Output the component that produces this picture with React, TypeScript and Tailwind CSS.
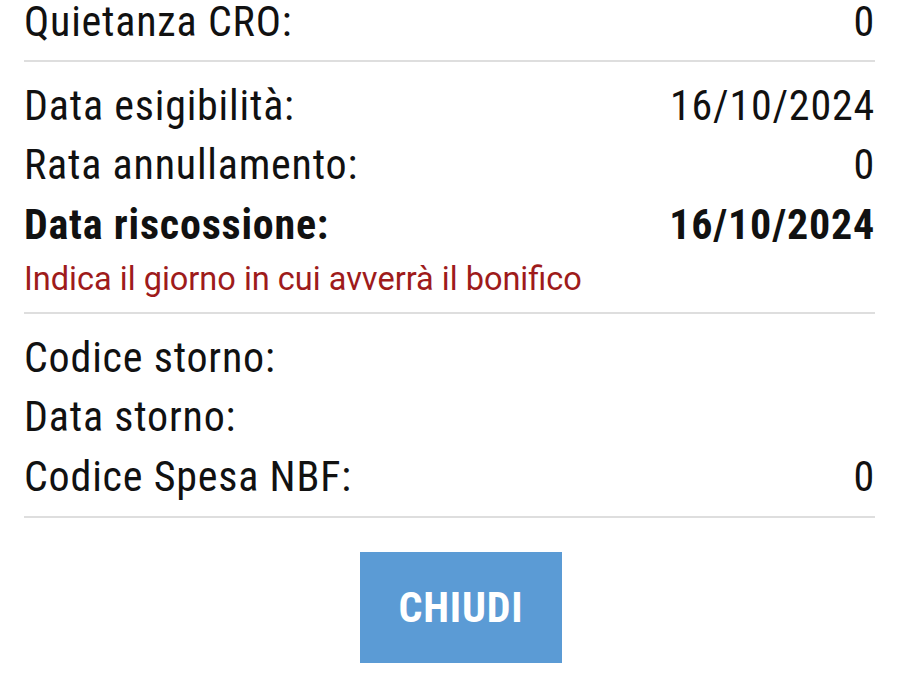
type Row = { label: string; value?: string; bold?: boolean }

const sections: { rows: Row[]; note?: string; pb: string }[] = [
  { rows: [{ label: 'Quietanza CRO:', value: '0' }], pb: 'pb-[9px]' },
  {
    rows: [
      { label: 'Data esigibilità:', value: '16/10/2024' },
      { label: 'Rata annullamento:', value: '0' },
      { label: 'Data riscossione:', value: '16/10/2024', bold: true },
    ],
    note: 'Indica il giorno in cui avverrà il bonifico',
    pb: 'pb-[9px]',
  },
  {
    rows: [
      { label: 'Codice storno:' },
      { label: 'Data storno:' },
      { label: 'Codice Spesa NBF:', value: '0' },
    ],
    pb: 'pb-[10px]',
  },
]

function DetailRow({ label, value, bold }: Row) {
  return (
    <div
      className={`flex justify-between text-[42px] leading-[59.5px] tracking-[0.8px] text-[#111] font-stretch-condensed ${
        bold ? 'font-bold' : 'font-normal'
      }`}
    >
      <span>{label}</span>
      <span>{value}</span>
    </div>
  )
}

export default function App() {
  return (
    <div className="min-h-[694px] overflow-hidden bg-white font-['Roboto',sans-serif]">
      <div className="mt-[-22px] px-6">
        {sections.map((s, i) => (
          <div key={i} className={`border-b-2 border-[#dedede] pt-[13.5px] ${s.pb}`}>
            {s.rows.map((r) => (
              <DetailRow key={r.label} {...r} />
            ))}
            {s.note && (
              <p className="mt-[2px] mb-[1px] text-[32.5px] leading-[46px] text-[#9e1b1b]">{s.note}</p>
            )}
          </div>
        ))}
      </div>
      <div className="mt-[34px] flex justify-center pl-[23px]">
        <button className="h-[111px] w-[202px] bg-[#5b9bd5] text-[42px] font-bold tracking-[0.8px] text-white font-stretch-condensed">
          CHIUDI
        </button>
      </div>
    </div>
  )
}
